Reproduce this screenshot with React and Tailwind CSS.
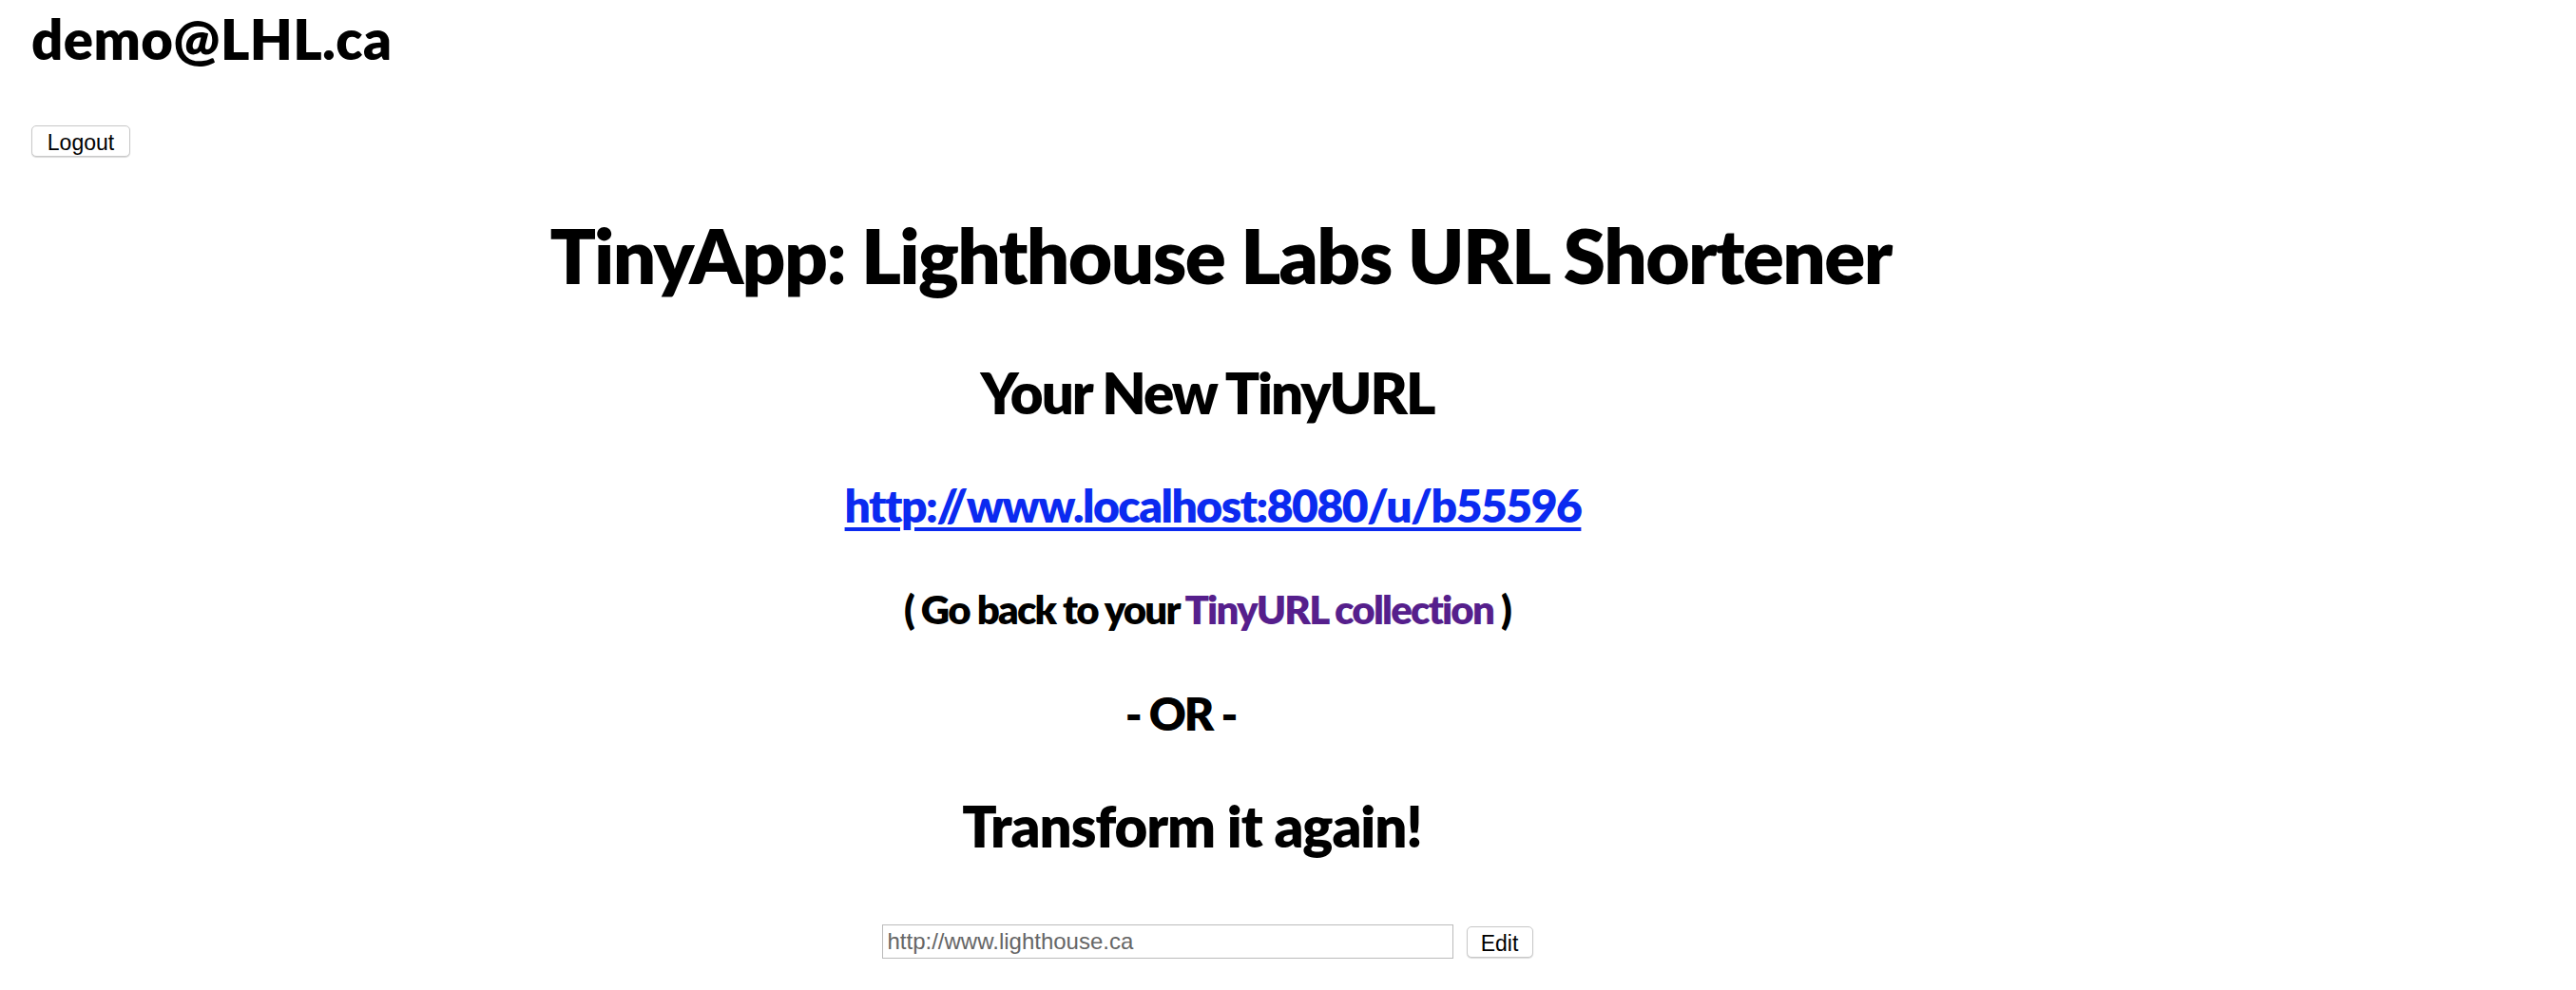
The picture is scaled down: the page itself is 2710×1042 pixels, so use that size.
export default function App() {
  const head = "font-['Lato','Open_Sans',sans-serif] font-extrabold text-black leading-none";

  return (
    <div className="min-h-screen bg-white">
      <div className="pl-[33px] pt-[12px]">
        <h2 className={`${head} text-[58px] tracking-[0.4px]`}>demo@LHL.ca</h2>
        <form className="mt-[62px]" onSubmit={e => e.preventDefault()}>
          <button
            type="submit"
            className="h-[33px] w-[104px] rounded-[5px] border border-[#c8c8c8] bg-white font-['Liberation_Sans',Arial,sans-serif] text-[23px] text-black shadow-[0_1px_1px_rgba(0,0,0,0.15)]"
          >
            Logout
          </button>
        </form>
      </div>

      <main className="ml-[33px] w-[2474px] text-center">
        <h1 className={`${head} mt-[63px] pl-[28px] text-[80px] tracking-[-1.6px]`}>TinyApp: Lighthouse Labs URL Shortener</h1>
        <h2 className={`${head} mt-[75px] text-[60px] tracking-[-2px]`}>Your New TinyURL</h2>
        <h3 className={`${head} mt-[65px] pl-[12px] text-[48px] tracking-[-1.5px]`}>
          <a href="#" className="text-[#0b2af0] underline decoration-[4px] underline-offset-[5px]">
            http://www.localhost:8080/u/b55596
          </a>
        </h3>
        <h4 className={`${head} mt-[64px] text-[42px] tracking-[-1.8px]`}>
          ( Go back to your <a href="#" className="text-[#561f8c]">TinyURL collection</a> )
        </h4>
        <h3 className={`${head} mt-[65px] pr-[56px] text-[48px] tracking-[-2px]`}>- OR -</h3>
        <h2 className={`${head} mt-[64px] pr-[32px] text-[60px] tracking-[-1.1px]`}>Transform it again!</h2>

        <form className="mt-[74px] flex items-center justify-center gap-[14px]" onSubmit={e => e.preventDefault()}>
          <input
            type="text"
            name="longURL"
            placeholder="http://www.lighthouse.ca"
            className="h-[36px] w-[601px] border border-[#bbbbbb] bg-white px-[5px] font-['Liberation_Sans',Arial,sans-serif] text-[24px] text-black outline-none placeholder:text-[#666666] placeholder:opacity-100"
          />
          <button
            type="submit"
            className="h-[33px] w-[70px] rounded-[5px] border border-[#c8c8c8] bg-white font-['Liberation_Sans',Arial,sans-serif] text-[23px] text-black shadow-[0_1px_1px_rgba(0,0,0,0.15)]"
          >
            Edit
          </button>
        </form>
      </main>
    </div>
  );
}
